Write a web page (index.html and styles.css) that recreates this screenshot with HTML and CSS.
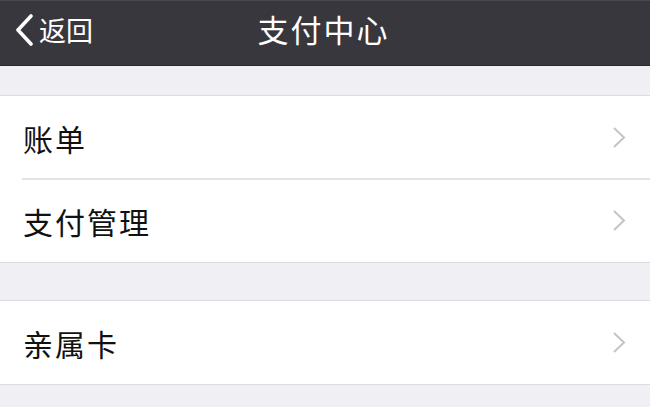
FILE: index.html
```html
<!DOCTYPE html>
<html lang="zh-CN">
<head>
    <meta charset="utf-8">
    <title>支付中心</title>
    <link rel="stylesheet" href="styles.css">
</head>
<body>
    <div class="navbar">
        <a class="back">
            <svg class="back-arrow" width="20" height="32" viewBox="0 0 20 32">
                <path d="M17 2 L4 16 L17 30" fill="none" stroke="#fff" stroke-width="3.6" stroke-linecap="round" stroke-linejoin="round"/>
            </svg>
            <span>返回</span>
        </a>
        <div class="title">支付中心</div>
    </div>

    <div class="group">
        <div class="cell">
            <span class="label">账单</span>
            <svg class="arrow" width="15" height="23" viewBox="0 0 15 23">
                <path d="M2 2 L12 11.5 L2 21" fill="none" stroke="#c4c4c9" stroke-width="2"/>
            </svg>
        </div>
        <div class="cell">
            <span class="label">支付管理</span>
            <svg class="arrow" width="15" height="23" viewBox="0 0 15 23">
                <path d="M2 2 L12 11.5 L2 21" fill="none" stroke="#c4c4c9" stroke-width="2"/>
            </svg>
        </div>
    </div>

    <div class="group">
        <div class="cell">
            <span class="label">亲属卡</span>
            <svg class="arrow" width="15" height="23" viewBox="0 0 15 23">
                <path d="M2 2 L12 11.5 L2 21" fill="none" stroke="#c4c4c9" stroke-width="2"/>
            </svg>
        </div>
    </div>
</body>
</html>
```

FILE: styles.css
```css
body {
    margin: 0;
    padding: 0;
    background-color: #efeff4;
    font-family: "Noto Sans CJK SC", "Noto Sans", sans-serif;
    color: #111;
}

.navbar {
    position: relative;
    height: 64px;
    background-color: #38373d;
    border-top: 1px solid #4a494f;
    border-bottom: 1px solid #2a2a2e;
    display: flex;
    align-items: center;
    justify-content: center;
}

.back {
    position: absolute;
    left: 14px;
    top: 13px;
    display: flex;
    align-items: center;
    gap: 5px;
    color: #fff;
    font-size: 27px;
    line-height: 32px;
}

.title {
    color: #fff;
    font-size: 31px;
    line-height: 34px;
    margin-top: -9px;
    margin-left: -3px;
    letter-spacing: 2px;
}

.group {
    margin-top: 29px;
    background-color: #fff;
    border-top: 1px solid #dcdce0;
    border-bottom: 1px solid #dcdce0;
}

.group + .group {
    margin-top: 37px;
}

.cell {
    position: relative;
    height: 83px;
    display: flex;
    align-items: center;
    justify-content: space-between;
    padding: 0 23px 0 23px;
}

.cell + .cell::before {
    content: "";
    position: absolute;
    left: 22px;
    right: 0;
    top: -1px;
    height: 2px;
    background-color: #e3e3e6;
}

.label {
    font-size: 30px;
    line-height: 34px;
    letter-spacing: 2px;
}

.arrow {
    display: block;
}
```
